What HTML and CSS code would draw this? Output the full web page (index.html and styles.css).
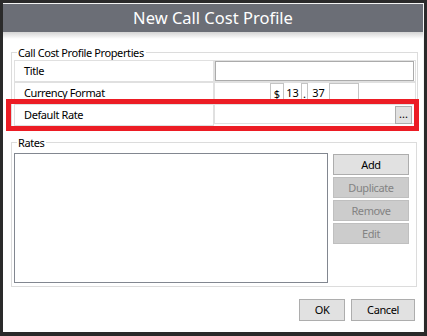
FILE: index.html
```html
<!DOCTYPE html>
<html>
<head>
<meta charset="utf-8">
<link rel="stylesheet" href="styles.css">
</head>
<body>
<div class="window">
  <div class="titlebar">New Call Cost Profile</div>
  <div class="shade"></div>
  <div class="content">
    <fieldset class="group props">
      <legend>Call Cost Profile Properties</legend>
      <div class="grid">
        <div class="cell label">Title</div>
        <div class="cell value"><div class="textbox"></div></div>
        <div class="cell label">Currency Format</div>
        <div class="cell value currency">
          <span class="seg boxed sym">$</span><span class="seg num">13</span><span class="seg boxed dot">.</span><span class="seg num">37</span><span class="seg boxed empty"></span>
        </div>
        <div class="cell label">Default Rate</div>
        <div class="cell value rate"><div class="dots">...</div></div>
      </div>
    </fieldset>
    <fieldset class="group rates">
      <legend>Rates</legend>
      <div class="rates-body">
        <div class="listbox"></div>
        <div class="side-buttons">
          <div class="btn">Add</div>
          <div class="btn disabled">Duplicate</div>
          <div class="btn disabled">Remove</div>
          <div class="btn disabled">Edit</div>
        </div>
      </div>
    </fieldset>
    <div class="footer">
      <div class="btn ok">OK</div>
      <div class="btn cancel">Cancel</div>
    </div>
  </div>
  <div class="highlight"></div>
</div>
</body>
</html>
```
FILE: styles.css
```css
html, body {
  margin: 0;
  padding: 0;
  background: #2a2a2a;
  height: 336px;
  overflow: hidden;
}
body {
  padding: 3px 0 0 3px;
  font-family: "Noto Sans", "Open Sans", sans-serif;
  font-size: 11px;
  letter-spacing: -0.4px;
  color: #000;
}
.window {
  position: relative;
  width: 421px;
  height: 329px;
  background: #fff;
  box-sizing: border-box;
  border-top: 1px solid #f4f4f4;
  border-right: 1px solid #f4f4f4;
}
.titlebar {
  height: 28px;
  background: #6b6e76;
  color: #fff;
  font-size: 16.5px;
  letter-spacing: 0;
  line-height: 28px;
  text-align: center;
}
.shade {
  height: 7px;
  background: linear-gradient(#d4d4d4, #ffffff);
}
.content {
  padding: 0 6px 0 8px;
}
.group {
  margin: 0;
  border: 1px solid #dcdcdc;
  padding: 0 1px 2px 2px;
}
.group legend {
  padding: 0 2px 0 1px;
  margin-left: 3px;
  line-height: 15px;
}
.props {
  margin-top: 6px;
  padding-top: 0;
}
.grid {
  display: grid;
  grid-template-columns: 200px 202px;
}
.cell {
  height: 20px;
  border: 1px solid #e0e0e0;
}
.label {
  line-height: 20px;
  padding-left: 9px;
}
.value {
  position: relative;
}
.textbox {
  box-sizing: border-box;
  width: 199px;
  height: 20px;
  border: 1px solid #ababab;
}
.currency {
  display: flex;
  padding-left: 55px;
}
.seg {
  box-sizing: border-box;
  height: 20px;
  line-height: 20px;
  text-align: center;
  letter-spacing: 0;
}
.boxed {
  border: 1px solid #c4c4c4;
  border-bottom: none;
}
.sym { width: 14px; }
.num { width: 17px; }
.num + .boxed.dot + .num { width: 21px; }
.dot { width: 7px; }
.empty { width: 30px; }
.rate {
  display: flex;
  justify-content: flex-end;
  padding-top: 1px;
  box-sizing: border-box;
}
.dots {
  box-sizing: border-box;
  width: 17px;
  height: 18px;
  margin-right: 3px;
  background: #e1e1e1;
  border: 1px solid #adadad;
  text-align: center;
  line-height: 14px;
  font-size: 11px;
  letter-spacing: 0;
}
.rates {
  margin-top: 6px;
  padding-top: 3px;
  padding-bottom: 3px;
}
.rates-body {
  display: flex;
  gap: 5px;
}
.listbox {
  box-sizing: border-box;
  width: 314px;
  height: 130px;
  border: 1px solid #828790;
}
.side-buttons {
  display: flex;
  flex-direction: column;
  gap: 2px;
  padding-top: 1px;
}
.btn {
  box-sizing: border-box;
  width: 76px;
  height: 21px;
  line-height: 19px;
  text-align: center;
  background: #e1e1e1;
  border: 1px solid #adadad;
}
.btn.disabled {
  background: #cccccc;
  border-color: #bfbfbf;
  color: #838383;
}
.footer {
  display: flex;
  justify-content: flex-end;
  gap: 6px;
  margin-top: 12px;
  padding-right: 2px;
}
.ok {
  width: 46px;
  height: 22px;
  line-height: 20px;
}
.cancel {
  width: 64px;
  height: 22px;
  line-height: 20px;
}
.highlight {
  position: absolute;
  left: 3px;
  top: 95px;
  width: 413px;
  height: 32px;
  box-sizing: border-box;
  border: 5px solid #ec1c24;
}
```
